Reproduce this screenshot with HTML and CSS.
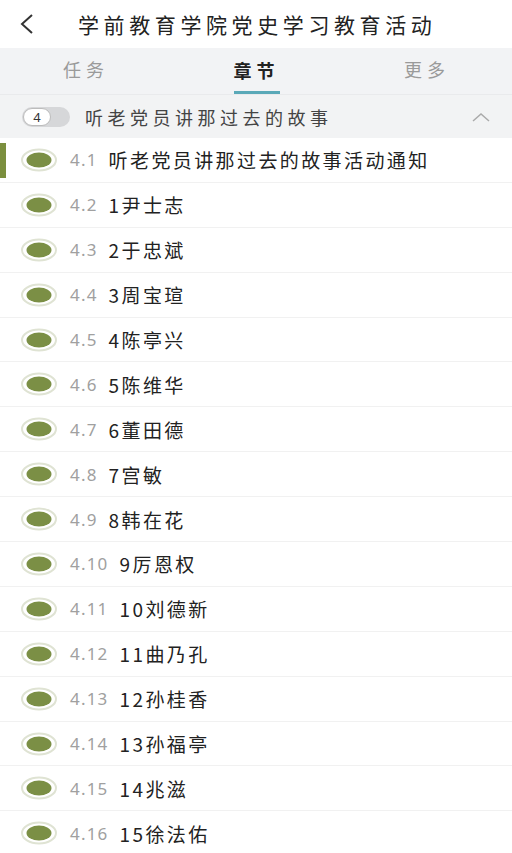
FILE: index.html
```html
<!DOCTYPE html>
<html>
<head>
  <title>章节</title>
  <link rel="stylesheet" href="styles.css">
</head>
<body>
  <div class="header">
    <svg class="back" width="18" height="22" viewBox="0 0 18 22">
      <path d="M14 2 L4 11 L14 20" fill="none" stroke="#333" stroke-width="2"/>
    </svg>
    <div class="title">学前教育学院党史学习教育活动</div>
  </div>

  <div class="tabs">
    <div class="tab">任务</div>
    <div class="tab active">章节</div>
    <div class="tab">更多</div>
  </div>

  <div class="section">
    <div class="badge"><span class="badgeNum">4</span></div>
    <div class="sectionTitle">听老党员讲那过去的故事</div>
    <svg class="chevron" width="18" height="10" viewBox="0 0 18 10">
      <path d="M1 9 L9 2 L17 9" fill="none" stroke="#aaa" stroke-width="1.5"/>
    </svg>
  </div>

  <div id="list"></div>

  <script>
    // Lista de capítulos
    const items = [
      ["4.1", "听老党员讲那过去的故事活动通知"],
      ["4.2", "1尹士志"],
      ["4.3", "2于忠斌"],
      ["4.4", "3周宝瑄"],
      ["4.5", "4陈亭兴"],
      ["4.6", "5陈维华"],
      ["4.7", "6董田德"],
      ["4.8", "7宫敏"],
      ["4.9", "8韩在花"],
      ["4.10", "9厉恩权"],
      ["4.11", "10刘德新"],
      ["4.12", "11曲乃孔"],
      ["4.13", "12孙桂香"],
      ["4.14", "13孙福亭"],
      ["4.15", "14兆滋"],
      ["4.16", "15徐法佑"]
    ];

    const list = document.getElementById("list");

    items.forEach((item, index) => {
      const row = document.createElement("div");
      row.classList.add("row");
      if (index === 0) row.classList.add("current");
      row.innerHTML = `
        <svg class="dot" width="38" height="24" viewBox="0 0 38 24">
          <ellipse cx="19" cy="12" rx="17" ry="10.5" fill="#fff" stroke="#dfe3d3" stroke-width="2"/>
          <ellipse cx="19" cy="12" rx="12.5" ry="7.5" fill="#7b8f45"/>
        </svg>
        <span class="num">${item[0]}</span>
        <span class="name">${item[1]}</span>
      `;
      list.appendChild(row);
    });
  </script>
</body>
</html>
```

FILE: styles.css
```css
body {
  margin: 0;
  background-color: white;
  font-family: "Noto Sans CJK SC", "Noto Sans", sans-serif;
  color: #222;
  overflow: hidden;
}

.header {
  height: 48px;
  display: flex;
  align-items: center;
}

.back {
  margin-left: 18px;
}

.title {
  margin-left: 42px;
  font-size: 21px;
  letter-spacing: 4.6px;
  color: #222;
  white-space: nowrap;
}

.tabs {
  height: 46px;
  background-color: #f2f3f5;
  display: flex;
  justify-content: space-between;
  align-items: center;
  padding: 0 62px 0 63px;
}

.tab {
  font-size: 18px;
  letter-spacing: 5px;
  color: #9a9a9a;
  height: 46px;
  line-height: 42px;
  box-sizing: border-box;
}

.tab.active {
  color: #222;
  font-weight: bold;
  border-bottom: 3px solid #5aa9b8;
  padding-top: 1px;
}

.section {
  height: 44px;
  background-color: #f2f3f4;
  display: flex;
  align-items: center;
  padding: 0 22px;
  border-top: 1px solid #e9eaec;
  box-sizing: border-box;
}

.badge {
  width: 48px;
  height: 20px;
  border-radius: 10px;
  background-color: #d6d7d9;
  display: flex;
  align-items: center;
}

.badgeNum {
  width: 28px;
  height: 18px;
  margin-left: 1px;
  border-radius: 9px;
  background-color: white;
  border: 1px solid #bcbcbc;
  box-sizing: border-box;
  font-size: 13px;
  line-height: 16px;
  text-align: center;
  color: #333;
  font-family: "Noto Sans", sans-serif;
}

.sectionTitle {
  margin-left: 15px;
  font-size: 18px;
  letter-spacing: 4.5px;
  color: #444;
  flex: 1;
}

.row {
  height: 44.9px;
  display: flex;
  align-items: center;
  padding-left: 20px;
  border-bottom: 1px solid #f1f1f1;
  box-sizing: border-box;
  position: relative;
}

.row.current::before {
  content: "";
  position: absolute;
  left: 0;
  top: 5px;
  width: 6px;
  height: 35px;
  background-color: #7b8f3e;
}

.num {
  margin-left: 12px;
  font-size: 17px;
  letter-spacing: 1.2px;
  color: #a0a0a0;
  font-family: "Noto Sans", sans-serif;
}

.name {
  margin-left: 11px;
  font-size: 19px;
  letter-spacing: 2.4px;
  color: #222;
}
```
